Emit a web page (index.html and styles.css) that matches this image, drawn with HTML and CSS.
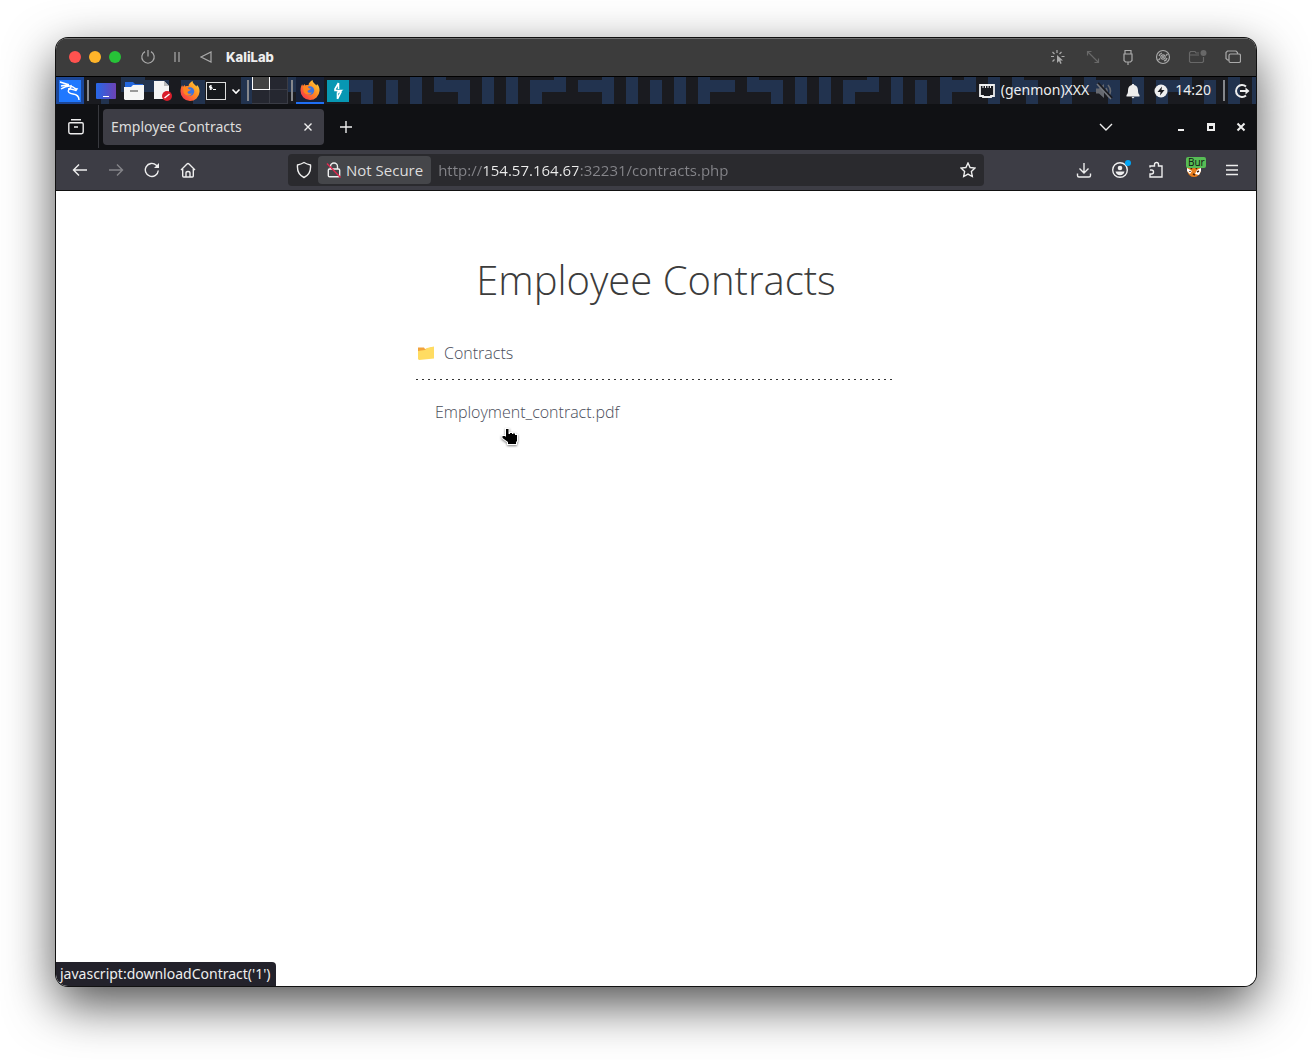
FILE: index.html
```html
<!DOCTYPE html>
<html lang="en">
<head>
    <meta charset="UTF-8">
    <meta name="viewport" content="width=device-width, initial-scale=1.0">
    <title>Employee Contracts</title>
    <link rel="stylesheet" href="styles.css">
</head>
<body>
    <div class="window">
        <!-- host window title bar -->
        <header class="titlebar">
            <div class="lights">
                <button class="light red" aria-label="Close window"></button>
                <button class="light yellow" aria-label="Minimize window"></button>
                <button class="light green" aria-label="Zoom window"></button>
            </div>
            <div class="vm-controls">
                <button aria-label="Power"><svg width="16" height="16" viewBox="0 0 16 16"><path d="M5 2.600a6.200 6.200 0 1 0 6 0M8 1v6.500"/></svg></button>
                <button aria-label="Pause"><svg width="16" height="16" viewBox="0 0 16 16"><path d="M6 3v10M10 3v10"/></svg></button>
                <button aria-label="Back"><svg width="16" height="16" viewBox="0 0 16 16"><path d="M13 3v10L3 8z"/></svg></button>
            </div>
            <h2 class="vm-name">KaliLab</h2>
            <div class="vm-tools">
                <button aria-label="Capture cursor"><svg width="16" height="16" viewBox="0 0 16 16"><path d="M7 1v3M2.500 3l2 2M1 7.500h3M2.500 12.500l2-2M11.500 3l-2 2M11.500 7.500h3"/><path class="solid" d="M7 6v8l2-2 1.500 3 1.200-.7L10.300 11.500h2.700z"/></svg></button>
                <button class="dim" aria-label="Resize"><svg width="16" height="16" viewBox="0 0 16 16"><path d="M2.500 2.500l11 11M2.500 6.500v-4h4M13.500 9.500v4h-4"/></svg></button>
                <button aria-label="USB devices"><svg width="16" height="16" viewBox="0 0 16 16"><path d="M5 5V1.500h6V5M4 5h8v6.500L10.500 13h-5L4 11.500zM8 13v3"/></svg></button>
                <button aria-label="Disc"><svg width="16" height="16" viewBox="0 0 16 16"><circle cx="8" cy="8" r="6.500"/><circle cx="8" cy="8" r="2.200"/><path d="M8 7v2M7 8h2M4 7a4 4 0 0 1 3-3M5 9.500 3.500 11M9 12a4 4 0 0 0 3-3M11 6.500 12.500 5"/></svg></button>
                <button class="dim" aria-label="Shared folder"><svg width="20" height="16" viewBox="0 0 20 16"><path d="M11 4H8L7 2.500H2.500L1.500 4v8.500l1 1h12l1-1V8M1.500 6H11"/><circle class="solid" cx="15.500" cy="4" r="3"/></svg></button>
                <button aria-label="Windows"><svg width="16" height="16" viewBox="0 0 16 16"><rect x="4" y="5" width="11.500" height="8.500" rx="1.500"/><path d="M4 11H2.500L1 9.500v-6L2.500 2H11l1.500 1.500V5"/></svg></button>
            </div>
        </header>

        <!-- xfce panel -->
        <nav class="panel" aria-label="Desktop panel">
            <svg class="wallpaper" viewBox="0 0 1200 27" preserveAspectRatio="none" aria-hidden="true">
                <path d="M0 0h27v27H0zM45 15h8v12h-8zM65 0h24v3h24v12H65zM137 15h12v12h-12zM125 3h24v12h-24zM185 0h12v27h-12zM232 0h12v15h-12zM293 3h24v24h-12V15h-12zM330 3h12v24h-12zM354 0h12v27h-12zM378 0h12v3h24v24h-12V15h-24zM426 0h12v27h-12zM450 0h12v27h-12zM474 3h24V0h12v15h-24v12h-12zM522 3h24V0h12v27h-12V15h-24zM570 0h12v27h-12zM594 3h12v24h-12zM618 0h12v27h-12zM642 0h12v3h25v12h-25v12h-12zM691 0h12v3h24v24h-12V15h-24zM739 0h12v27h-12zM763 0h12v27h-12zM787 3h24V0h12v15h-24v12h-12zM835 0h12v27h-12zM859 3h12v24h-12zM884 0h12v3h12V0h12v15h-24v12h-12zM932 0h12v27h-12zM956 0h12v3h14v24h-12V15h-14zM1004 0h12v27h-12zM1028 0h12v3h24v24h-12V15h-24zM1076 0h12v27h-12zM1100 3h24V0h12v15h-24v12h-12zM1148 3h12v24h-12zM1172 0h12v27h-12zM1196 0h4v27h-4z"/>
            </svg>
            <div class="launchers">
                <button class="item kali" aria-label="Applications"><svg width="24" height="24" viewBox="0 0 24 24"><rect x="1" y="1" width="22" height="22" fill="#1f78ff"/><path d="M2 3l8 2.500M3 7l8-1.500M3 10c5-3 9-4 12-2 1 1 2.500 2 4 2l-1 1.500C15 11 13 9 11 10.500c-2 2 0 4 4 4.500 4 .5 6 3 6 6M10 10c2 0 4-2 3-4" fill="none" stroke="#fff" stroke-width="1.400"/></svg></button>
                <span class="sep"></span>
                <button class="item" aria-label="Show desktop"><svg width="20" height="20" viewBox="0 0 20 20"><defs><linearGradient id="desk"><stop offset="0" stop-color="#2668e8"/><stop offset="1" stop-color="#6c42b5"/></linearGradient></defs><rect y="2" width="20" height="16" rx="1" fill="url(#desk)"/><path fill="#fff" d="M7 15h6v1H7z"/></svg></button>
                <button class="item" aria-label="Files"><svg width="20" height="20" viewBox="0 0 20 20"><path fill="#2367de" d="M1 1h8l2 2h8v5H1z"/><path fill="#f5f5f5" d="M0 6h7l2-2h11v14l-1 1H1l-1-1z"/><path fill="#999" d="M6 9h8v2H6z"/></svg></button>
                <button class="item" aria-label="Text editor"><svg width="20" height="20" viewBox="0 0 20 20"><path fill="#f4f4f4" d="M2 0h10l5 5v13H2z"/><path fill="#bbb" d="M12 0v5h5z"/><circle cx="15" cy="15" r="5" fill="#d91e2b"/><path stroke="#fff" stroke-width="1.500" d="M12.500 17l5-4"/></svg></button>
                <button class="item" aria-label="Firefox"><svg width="20" height="20" viewBox="0 0 20 20"><use href="#firefox"/></svg></button>
                <button class="item term" aria-label="Terminal"><svg width="20" height="20" viewBox="0 0 20 20"><rect x=".5" y="1.500" width="19" height="17" fill="#16181c" stroke="#ddd"/><path d="M6 5H3.500v1.500H6V8H3.500M4.700 4v5M7 8.500h3" fill="none" stroke="#fff"/></svg></button>
                <button class="item more" aria-label="More terminals"><svg width="10" height="10" viewBox="0 0 10 10"><path d="M1.500 3.500 5 7l3.500-3.500" fill="none" stroke="#fff" stroke-width="1.600"/></svg></button>
                <span class="sep"></span>
                <div class="pager"><button class="current" aria-label="Workspace 1"></button><button aria-label="Workspace 2"></button><button aria-label="Workspace 3"></button><button aria-label="Workspace 4"></button></div>
                <span class="sep"></span>
                <button class="item active" aria-label="Firefox window"><svg width="20" height="20" viewBox="0 0 20 20">
                    <defs><linearGradient id="flame" x1="1" y1="0" x2="0" y2="1"><stop offset="0" stop-color="#ffdf3d"/><stop offset=".45" stop-color="#ff8b22"/><stop offset="1" stop-color="#f52553"/></linearGradient></defs>
                    <g id="firefox"><path fill="url(#flame)" d="M10 20A9.500 9.500 0 0 1 .5 10.500c0-3 .8-5 1.700-6.300L3 6l1.500-2 1 1.500c1-.4 2-.5 3-.3C8.500 3 10.500 1 12.500 0c0 2.500 2.500 3.500 4 5.500l.5-1.500c2 2 2.800 4.500 2.500 7A9.500 9.500 0 0 1 10 20z"/><circle cx="10" cy="10.500" r="4.200" fill="#3973e0"/><path fill="#ff8521" d="M3 6c2-.5 4 0 6 2.200l2 .3c-1 1.500-3 1.500-3.500 2.500 0 2 3 2.500 4.500 1-1 3.500-7 3.500-8.500-.5z"/></g></svg></button>
                <button class="item" aria-label="Burp Suite"><svg width="22" height="22" viewBox="0 0 22 22"><path fill="#0797b3" d="M0 0h22v22H0z"/><path d="M11.500 3 8 9v1.500h6L10.500 13v6M11.500 3v6M8 10l6 2-3.500 7" fill="none" stroke="#fff" stroke-width="1.600"/></svg></button>
            </div>
            <div class="tray">
                <button class="item" aria-label="Network"><svg width="18" height="18" viewBox="0 0 18 18"><path d="M2 3h14v11h-3v1H5v-1H2z" fill="#1a1b20" stroke="#eee" stroke-width="1.800"/><path d="M5 3v3M7.500 3v3M10 3v3M12.500 3v3" stroke="#eee"/></svg></button>
                <span class="genmon">(genmon)XXX</span>
                <button class="item wide" aria-label="Muted"><svg width="18" height="18" viewBox="0 0 18 18"><path fill="#666970" d="M1 6.500h3L9 2v14l-5-4.500H1z"/><path d="M11 6q2 3 0 6M13 3q5 6 0 12" fill="none" stroke="#666970" stroke-width="1.600"/><path d="M3 1l14 15" stroke="#1a1b20" stroke-width="2"/><path d="M2 2l14 15" stroke="#74777e" stroke-width="1.600"/></svg></button>
                <button class="item" aria-label="Notifications"><svg width="14" height="16" viewBox="0 0 14 16"><path fill="#eee" d="M7 1c1 0 1.200.5 1.200 1C11 2.700 12 5 12 7.500c0 2.500.5 3.500 1.500 4.500v1.500H.5V12C1.500 11 2 10 2 7.500 2 5 3 2.700 5.800 2 5.800 1.500 6 1 7 1zM5.500 14h3L7 15.500z"/></svg></button>
                <button class="item" aria-label="Power manager"><svg width="14" height="14" viewBox="0 0 14 14"><circle cx="7" cy="7" r="6.500" fill="#eee"/><path fill="#1b1c21" d="M8 2.500 3.500 8h3L6 11.500 10.500 6h-3z"/></svg></button>
                <time class="clock">14:20</time>
                <span class="sep"></span>
                <button class="item" aria-label="Log out"><svg width="16" height="16" viewBox="0 0 16 16"><path d="M12 3.500a6 6 0 1 0 0 9M6 8h7" fill="none" stroke="#eee" stroke-width="2"/><path fill="#eee" d="M11.500 4.500 15.500 8l-4 3.500z"/></svg></button>
            </div>
        </nav>

        <!-- browser tabs -->
        <div class="tabs">
            <button class="tab-btn history" aria-label="Recent browsing"><svg width="18" height="18" viewBox="0 0 18 18"><path d="M4 1.700h10M3 4.700h12q1.200 0 1.200 1.200v8.200q0 1.700-1.700 1.700h-11q-1.700 0-1.700-1.700V5.900Q1.800 4.700 3 4.700zM7 9h4"/></svg></button>
            <div class="tab">
                <a href="#contracts" class="tab-title">Employee Contracts</a>
                <button class="tab-close" aria-label="Close tab"><svg width="10" height="10" viewBox="0 0 10 10"><path d="M1.500 1.500l7 7M8.500 1.500l-7 7"/></svg></button>
            </div>
            <button class="tab-btn" aria-label="New tab"><svg width="14" height="14" viewBox="0 0 14 14"><path d="M7 1v12M1 7h12"/></svg></button>
            <button class="tab-btn list-tabs" aria-label="List all tabs"><svg width="14" height="14" viewBox="0 0 14 14"><path d="M1 4l6 6 6-6"/></svg></button>
            <div class="win-buttons">
                <button aria-label="Minimize"><svg width="10" height="10" viewBox="0 0 10 10"><path class="solid" d="M2 7h6v2H2z"/></svg></button>
                <button aria-label="Maximize"><svg width="10" height="10" viewBox="0 0 10 10"><path d="M2 2h6v6H2zM2 3h6" stroke-width="2"/></svg></button>
                <button aria-label="Close"><svg width="10" height="10" viewBox="0 0 10 10"><path class="bold" d="M1.500 1.500l7 7M8.500 1.500l-7 7"/></svg></button>
            </div>
        </div>

        <!-- browser toolbar -->
        <div class="toolbar">
            <button class="tool" aria-label="Back"><svg width="16" height="16" viewBox="0 0 16 16"><path d="M15 8H1.500M7 2.500 1.500 8 7 13.500"/></svg></button>
            <button class="tool disabled" aria-label="Forward" disabled><svg width="16" height="16" viewBox="0 0 16 16"><path d="M1 8h13.500M9 2.500 14.500 8 9 13.500"/></svg></button>
            <button class="tool" aria-label="Reload"><svg width="16" height="16" viewBox="0 0 16 16"><path d="M14.300 8.500a6.500 6.500 0 1 1-2-5.300L14 5"/><path class="solid" d="M15 1v5h-5z"/></svg></button>
            <button class="tool" aria-label="Home"><svg width="16" height="16" viewBox="0 0 16 16"><path d="M1 8l6-6q1-1 2 0l6 6M2.700 7v7q0 1 1 1h8.600q1 0 1-1V7M6 15v-4q0-1.500 2-1.500t2 1.500v4"/></svg></button>
            <div class="urlbar">
                <button class="shield" aria-label="Tracking protection"><svg width="16" height="18" viewBox="0 0 16 18"><path d="M8 1.500c2 1.200 4 2 6.500 2.500.5 5.500-1 10-6.500 12.500C2.500 14 1 9.500 1.500 4 4 3.500 6 2.700 8 1.500z"/></svg></button>
                <button class="secure"><svg width="16" height="16" viewBox="0 0 16 16"><path d="M4.500 7V4.500a3.500 3.500 0 0 1 7 0V7M3.500 7h9q1.200 0 1.200 1.200v5.300q0 1.200-1.200 1.200h-9q-1.200 0-1.200-1.200V8.200Q2.300 7 3.500 7z"/><path class="strike" d="M1 1.500 14.500 15.500"/></svg><span>Not Secure</span></button>
                <input class="address" type="text" aria-label="Address" value="http://154.57.164.67:32231/contracts.php">
                <button class="star" aria-label="Bookmark"><svg width="16" height="16" viewBox="0 0 16 16"><path d="M8 1l2.100 4.500 4.900.6-3.600 3.400.9 5L8 12.100l-4.300 2.400.9-5L1 6.100l4.900-.6z"/></svg></button>
            </div>
            <button class="tool" aria-label="Downloads"><svg width="16" height="16" viewBox="0 0 16 16"><path d="M8 1v10M3.500 6.500 8 11l4.500-4.500M1.500 11.500v2q0 1.500 1.500 1.500h10q1.500 0 1.500-1.500v-2"/></svg></button>
            <button class="tool account" aria-label="Account"><svg width="18" height="18" viewBox="0 0 18 18"><circle cx="9" cy="9" r="7.300"/><circle class="solid" cx="9" cy="7" r="2.300"/><path class="solid" d="M4.500 10.500h9q-1 3.800-4.500 3.800t-4.500-3.800z"/></svg><span class="dot"></span></button>
            <button class="tool" aria-label="Extensions"><svg width="16" height="18" viewBox="0 0 16 18"><path d="M2 6.500V5h4.500V3.500a2 2 0 0 1 4 0V5H14v11H2v-3h1.500a2 2 0 0 0 0-4H2"/></svg></button>
            <button class="tool burp" aria-label="Burp proxy"><svg width="16" height="16" viewBox="0 0 16 16"><path fill="#e77d1d" d="M1 2l4 2h6l4-2v7q-2 6-7 6T1 9z"/><path fill="#fff" d="M1 6l5 3-2 3-3-3zM15 6l-4 2-2 4 4 1 2-4z"/><path class="stripes" d="M3 4l3 3M12 4l-2 3M7 12l2 1M11 10l2-1M4 9v1"/></svg><span class="badge">Bur</span></button>
            <button class="tool" aria-label="Menu"><svg width="14" height="14" viewBox="0 0 14 14"><path d="M1 2.500h12M1 7h12M1 11.500h12"/></svg></button>
        </div>

        <main class="page" id="contracts">
            <h1>Employee Contracts</h1>
            <section class="contracts">
                <h3 class="folder"><svg width="20" height="18" viewBox="0 0 20 18"><path fill="#f2a33c" d="M2 3.500h6L9 5l8-2v5H2z"/><path fill="#ffdc62" d="M2 7l7-1 2-2 7-1.500v12L3 16l-1-1z"/></svg>Contracts</h3>
                <ul class="files">
                    <li><a href="javascript:downloadContract('1')">Employment_contract.pdf</a>
                        <svg class="pointer" width="18" height="18" viewBox="0 0 18 18"><path d="M5 1h2.500v5H9V5h2v1h1V5.500h2V7h2v6l-1 1v2H7v-2l-5.500-4V8H4l1 1z" fill="#000" stroke="#fff" stroke-width="2" paint-order="stroke"/></svg>
                    </li>
                </ul>
            </section>
            <div class="status">javascript:downloadContract('1')</div>
        </main>
    </div>
    <script>
        function downloadContract(id) {
            console.log('contract', id);
        }
    </script>
</body>
</html>
```
FILE: styles.css
```css
* {
    box-sizing: border-box;
}
body {
    margin: 0;
    padding: 38px 56px 74px;
    min-height: 100vh;
    background-color: #fff;
    font-family: "Noto Sans", sans-serif;
    font-size: 14px;
    display: flex;
}
button {
    border: none;
    padding: 0;
    background: none;
    color: inherit;
    font: inherit;
    display: flex;
    align-items: center;
    justify-content: center;
    cursor: pointer;
}
h1, h2, h3, ul {
    margin: 0;
    padding: 0;
}
svg {
    flex-shrink: 0;
}
.window {
    flex: 1;
    display: flex;
    flex-direction: column;
    border-radius: 12px;
    overflow: hidden;
    box-shadow: 0 0 0 1px #111, 0 18px 50px rgba(0, 0, 0, 0.7);
}

/* title bar */
.titlebar {
    height: 39px;
    padding: 0 13px 2px;
    display: flex;
    align-items: center;
    background-color: #3c3c3c;
    border-top: 1px solid #707070;
    border-bottom: 1px solid #000;
}
.titlebar svg {
    fill: none;
    stroke: #aaa;
    stroke-width: 1.2;
}
.titlebar .solid {
    fill: #aaa;
    stroke: none;
}
.lights {
    display: flex;
    gap: 8px;
}
.light {
    width: 12px;
    height: 12px;
    border-radius: 50%;
}
.red {
    background-color: #ff524f;
}
.yellow {
    background-color: #ffb429;
}
.green {
    background-color: #27c338;
}
.vm-controls {
    display: flex;
    gap: 13px;
    margin-left: 19px;
}
.vm-name {
    margin-left: 12px;
    font-family: Inter, sans-serif;
    font-size: 13px;
    font-weight: 800;
    color: #eee;
}
.vm-tools {
    display: flex;
    gap: 15px;
    margin-left: auto;
}
.vm-tools button {
    width: 20px;
}
.dim {
    opacity: 0.4;
}

/* desktop panel */
.panel {
    position: relative;
    height: 27px;
    display: flex;
    justify-content: space-between;
    background-color: #1a1b20;
    color: #eee;
}
.wallpaper {
    position: absolute;
    top: 0;
    left: 0;
    width: 100%;
    height: 27px;
    fill: #22334f;
}
.launchers, .tray {
    position: relative;
    display: flex;
    align-items: center;
}
.item {
    width: 28px;
    height: 27px;
}
.kali {
    background-color: #1c4798;
}
.sep {
    width: 2px;
    height: 21px;
    margin: 0 3px;
    background-color: #85878c;
}
.term {
    width: 24px;
}
.more {
    width: 16px;
}
.wide {
    width: 30px;
}
.active {
    border-bottom: 2px solid #1f6ff5;
    background-color: #172138;
}
.pager {
    width: 36px;
    height: 27px;
    display: grid;
    grid-template-columns: 1fr 1fr;
    grid-template-rows: 13px 14px;
    background-color: #252730;
}
.pager button {
    border-right: 1px solid #3a3c45;
    border-bottom: 1px solid #3a3c45;
}
.pager .current {
    border: 1px solid #fff;
    border-top: none;
    background-color: #444;
}
.genmon, .clock {
    padding-bottom: 2px;
}
.tray .sep {
    margin: 0 3px 0 12px;
}

/* browser tabs */
.tabs {
    height: 46px;
    padding-bottom: 1px;
    display: flex;
    align-items: center;
    background-color: #101114;
    color: #fbfbfe;
}
.tabs svg, .toolbar svg {
    fill: none;
    stroke: #eee;
    stroke-width: 1.4;
}
.tabs .solid, .toolbar .solid {
    fill: #eee;
    stroke: none;
}
.tabs .bold {
    stroke-width: 2;
}
.tab-btn {
    width: 44px;
    height: 36px;
}
.history {
    width: 43px;
    height: 43px;
    padding-right: 2px;
    border-right: 1px solid #38393e;
}
.tab {
    width: 221px;
    height: 36px;
    margin-left: 4px;
    padding: 0 8px;
    display: flex;
    align-items: center;
    justify-content: space-between;
    border-radius: 4px;
    background-color: #3d3d45;
}
.tab-title {
    color: #ddd;
    text-decoration: none;
}
.tab-close {
    width: 16px;
    height: 20px;
}
.list-tabs {
    margin-left: auto;
}
.win-buttons {
    display: flex;
    margin-left: 38px;
}
.win-buttons button {
    width: 30px;
    height: 30px;
}

/* browser toolbar */
.toolbar {
    height: 41px;
    padding: 0 6px;
    display: flex;
    align-items: center;
    background-color: #3d3d45;
    border-bottom: 1px solid #111;
    font-family: "Open Sans", sans-serif;
    font-size: 15px;
}
.tool {
    position: relative;
    width: 36px;
    height: 36px;
}
.disabled {
    opacity: 0.4;
}
.urlbar {
    flex: 1;
    height: 32px;
    margin: 0 82px;
    display: flex;
    align-items: center;
    border-radius: 4px;
    background-color: #2a2a2e;
}
.shield {
    width: 30px;
    height: 32px;
    padding-left: 2px;
}
.secure {
    height: 28px;
    padding: 0 8px;
    gap: 4px;
    border-radius: 4px;
    background-color: #45464a;
    color: #ddd;
}
.toolbar .strike {
    stroke: #e22850;
}
.address {
    flex: 1;
    min-width: 0;
    height: 28px;
    padding: 0 0 0 7px;
    border: none;
    outline: none;
    font: inherit;
    /* the host name is brighter than the rest of the address */
    color: transparent;
    background: linear-gradient(90deg, #85858a 51px, #eee 51px, #eee 147px, #85858a 147px);
    background-clip: text;
    -webkit-background-clip: text;
}
.star {
    width: 32px;
    height: 32px;
}
.dot {
    position: absolute;
    top: 8px;
    right: 7px;
    width: 6px;
    height: 6px;
    border-radius: 50%;
    background-color: #00a4f5;
}
.burp {
    width: 40px;
}
.toolbar .burp svg {
    stroke: none;
}
.burp .stripes {
    stroke: #42200b;
}
.badge {
    position: absolute;
    top: 5px;
    left: 12px;
    width: 20px;
    height: 11px;
    padding-left: 2px;
    border-radius: 2px;
    background-color: #57bd55;
    color: #111;
    font-size: 10px;
    line-height: 11px;
    text-align: left;
}

/* page */
.page {
    position: relative;
    flex: 1;
    padding: 60px 20px;
    background-color: #fff;
    color: #3c3c3c;
    font-family: "Open Sans", sans-serif;
    font-weight: 300;
}
.page h1 {
    font-size: 40px;
    font-weight: 300;
    line-height: 58px;
    text-align: center;
}
.contracts {
    max-width: 480px;
    margin: 26px auto 0;
    color: #4a4d5a;
    font-size: 16px;
    line-height: 24px;
}
.folder {
    padding: 6px 0 15px;
    display: flex;
    align-items: center;
    gap: 8px;
    background: repeating-linear-gradient(90deg, #333 0 2px, transparent 2px 6px) bottom / 100% 1px no-repeat;
    font-size: 16px;
    font-weight: 300;
}
.files {
    padding: 20px 19px;
    list-style: none;
}
.files li {
    position: relative;
}
.files a {
    color: inherit;
    text-decoration: none;
}
.pointer {
    position: absolute;
    top: 28px;
    left: 66px;
    filter: drop-shadow(0 1px 1px rgba(0, 0, 0, 0.5));
}
.status {
    position: absolute;
    left: 0;
    bottom: 0;
    height: 24px;
    padding: 0 5px 0 4px;
    border-top-right-radius: 4px;
    background-color: #23222b;
    color: #eee;
    font-family: "Noto Sans", sans-serif;
    font-size: 14px;
    font-weight: 400;
    line-height: 24px;
}
```
